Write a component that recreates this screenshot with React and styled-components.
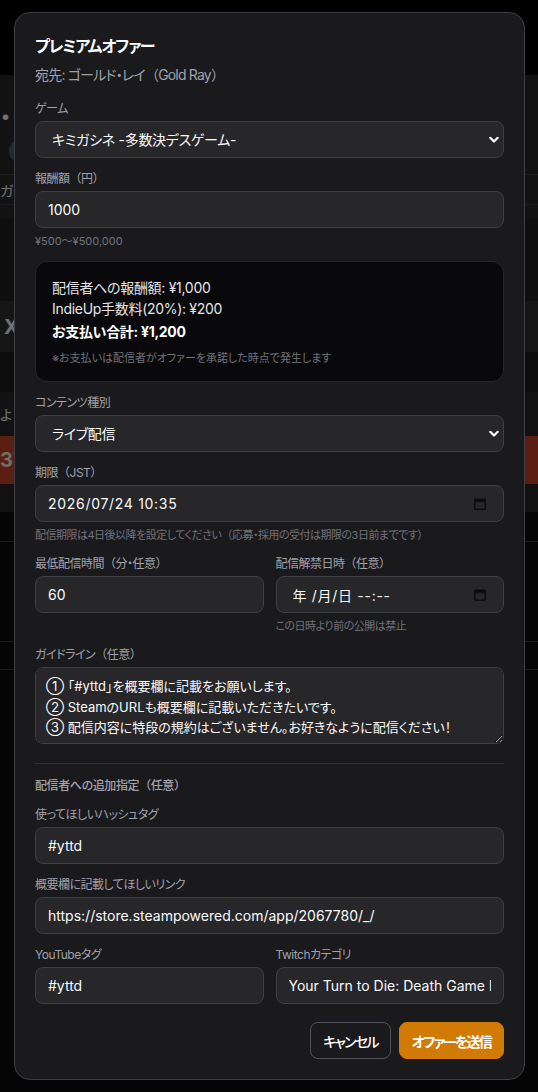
import React from 'react'
import styled, { createGlobalStyle } from 'styled-components'

const GlobalStyle = createGlobalStyle`
  * { box-sizing: border-box; }
  html, body { margin: 0; padding: 0; background: #000; }
  body {
    font-family: Inter, "Noto Sans CJK JP", sans-serif;
    font-feature-settings: "palt";
    color: #fafafa;
  }
`

// full-width brackets keep their spacing, the rest stays proportional
const Wide = styled.span`
  font-feature-settings: normal;
`
const jp = (text) =>
  text.split(/([（）])/).map((part, i) =>
    part === '（' || part === '）' ? <Wide key={i}>{part}</Wide> : part
  )

function ChevronDown() {
  return (
    <svg width="10" height="7" viewBox="0 0 10 7" fill="none">
      <path d="M1.3 1.3 5 5 8.7 1.3" stroke="currentColor" strokeWidth="2.2" strokeLinecap="round" strokeLinejoin="round" />
    </svg>
  )
}

function CalendarIcon() {
  return (
    <svg width="12" height="12" viewBox="0 0 12 12">
      <rect x="0.75" y="1.25" width="10.5" height="10" rx="1" fill="none" stroke="#0c0c0c" strokeWidth="1.5" />
      <rect x="0.75" y="1.25" width="10.5" height="3" fill="#0c0c0c" />
    </svg>
  )
}

export default function App() {
  return (
    <>
      <GlobalStyle />
      <Page>
        <TopBar />
        <Hero>
          <HeroName>・レイ</HeroName>
          <Avatar />
        </Hero>
        <Band $h={30} $bg="#242424" $line>
          <BgText>ガシネ</BgText>
        </Band>
        <Band $h={14} $bg="#242424" />
        <Band $h={82} $bg="#1e1e1e" />
        <Band $h={51} $bg="#2c2c2c" $pad={4}>
          <BgText $size={20} $bold>XI</BgText>
        </Band>
        <Band $h={40} $bg="#181818" />
        <Band $h={44} $bg="#242424">
          <BgText>よ</BgText>
        </Band>
        <Band $h={48} $bg="#b43c24">
          <BgText $size={20} $bold $color="#ddd">37</BgText>
        </Band>
        <Band $h={28} $bg="#222" />
        <Band $h={30} $bg="#0a0a0a" $line />
        <Band $h={100} $bg="#0a0a0a" $line />
        <Band $h={28} $bg="#0a0a0a" $line />
      </Page>

      <Overlay>
        <Modal>
          <Title>プレミアムオファー</Title>
          <Subtitle>{jp('宛先: ゴールド・レイ（Gold Ray）')}</Subtitle>

          <Form>
            <Field>
              <Label>ゲーム</Label>
              <SelectWrap>
                <Select defaultValue="kimi">
                  <option value="kimi">キミガシネ -多数決デスゲーム-</option>
                </Select>
                <SelectArrow>
                  <ChevronDown />
                </SelectArrow>
              </SelectWrap>
            </Field>

            <Field>
              <Label>{jp('報酬額（円）')}</Label>
              <Input defaultValue="1000" />
              <Help $latin>¥500〜¥500,000</Help>
            </Field>

            <Summary>
              <SummaryLine>配信者への報酬額: ¥1,000</SummaryLine>
              <SummaryLine>IndieUp手数料(20%): ¥200</SummaryLine>
              <SummaryLine $strong>お支払い合計: ¥1,200</SummaryLine>
              <SummaryNote>※お支払いは配信者がオファーを承諾した時点で発生します</SummaryNote>
            </Summary>

            <Field>
              <Label>コンテンツ種別</Label>
              <SelectWrap>
                <Select defaultValue="live">
                  <option value="live">ライブ配信</option>
                </Select>
                <SelectArrow>
                  <ChevronDown />
                </SelectArrow>
              </SelectWrap>
            </Field>

            <Field>
              <Label>{jp('期限（JST）')}</Label>
              <DateBox>
                <DateInput defaultValue="2026/07/24 10:35" readOnly />
                <CalendarIcon />
              </DateBox>
              <Help>{jp('配信期限は4日後以降を設定してください（応募・採用の受付は期限の3日前までです）')}</Help>
            </Field>

            <Row>
              <Field>
                <Label>{jp('最低配信時間（分・任意）')}</Label>
                <Input defaultValue="60" />
              </Field>
              <Field>
                <Label>{jp('配信解禁日時（任意）')}</Label>
                <DateBox $indent>
                  <DateInput defaultValue="年 /月/日 --:--" readOnly />
                  <CalendarIcon />
                </DateBox>
                <Help>この日時より前の公開は禁止</Help>
              </Field>
            </Row>

            <Field>
              <Label>{jp('ガイドライン（任意）')}</Label>
              <TextArea
                defaultValue={
                  '① 「#yttd」を概要欄に記載をお願いします。\n② SteamのURLも概要欄に記載いただきたいです。\n③ 配信内容に特段の規約はございません。お好きなように配信ください！'
                }
              />
            </Field>

            <Divider />

            <SectionTitle>{jp('配信者への追加指定（任意）')}</SectionTitle>

            <Field>
              <Label>使ってほしいハッシュタグ</Label>
              <Input defaultValue="#yttd" />
            </Field>

            <Field>
              <Label>概要欄に記載してほしいリンク</Label>
              <Input defaultValue="https://store.steampowered.com/app/2067780/_/" />
            </Field>

            <Row>
              <Field>
                <Label>YouTubeタグ</Label>
                <Input defaultValue="#yttd" />
              </Field>
              <Field>
                <Label>Twitchカテゴリ</Label>
                <Input defaultValue="Your Turn to Die: Death Game by Majority" />
              </Field>
            </Row>

            <Actions>
              <Button type="button">キャンセル</Button>
              <Button type="button" $primary>
                オファーを送信
              </Button>
            </Actions>
          </Form>
        </Modal>
      </Overlay>
    </>
  )
}

/* background page (dimmed behind the dialog) */

const Page = styled.div`
  min-height: 100vh;
  background: #0a0a0a;
  overflow: hidden;
`

const TopBar = styled.header`
  height: 75px;
  background: #000;
`

const Hero = styled.section`
  height: 100px;
  background: #242424;
  border-bottom: 1px solid #3a3a3a;
  padding-top: 28px;
`

const HeroName = styled.h1`
  margin: 0;
  font-size: 22px;
  line-height: 28px;
  font-weight: 700;
  color: #e5e5e5;
  white-space: nowrap;
`

const Avatar = styled.div`
  width: 24px;
  height: 24px;
  margin: 8px 0 0 9px;
  border-radius: 50%;
  background: #38566a;
`

const Band = styled.div`
  height: ${({ $h }) => $h}px;
  background: ${({ $bg }) => $bg};
  border-bottom: ${({ $line }) => ($line ? '1px solid #383838' : 'none')};
  padding-left: ${({ $pad }) => $pad || 0}px;
  display: flex;
  align-items: center;
  overflow: hidden;
  white-space: nowrap;
`

const BgText = styled.span`
  font-size: ${({ $size }) => $size || 14}px;
  font-weight: ${({ $bold }) => ($bold ? 700 : 400)};
  color: ${({ $color }) => $color || '#e5e5e5'};
`

/* dialog */

const Overlay = styled.div`
  position: fixed;
  inset: 0;
  background: rgba(0, 0, 0, 0.5);
  display: flex;
  align-items: center;
  justify-content: center;
  padding: 11px 13px 11px 14px;
`

const Modal = styled.div`
  width: 100%;
  max-width: 512px;
  background: #1a1a1d;
  border: 1px solid #3f3f46;
  border-radius: 16px;
  padding: 20px;
`

const Title = styled.h2`
  margin: 0;
  font-size: 16px;
  line-height: 26px;
  font-weight: 700;
  letter-spacing: -1.2px;
  color: #fafafa;
`

const Subtitle = styled.p`
  margin: 6px 0 0;
  font-size: 14px;
  line-height: 20px;
  letter-spacing: -0.8px;
  color: #a1a1aa;
`

const Form = styled.div`
  display: flex;
  flex-direction: column;
  gap: 12px;
  margin-top: 15px;
`

const Field = styled.div`
  display: flex;
  flex-direction: column;
  gap: 4px;
  min-width: 0;
`

const Label = styled.label`
  font-size: 12px;
  line-height: 17px;
  letter-spacing: -0.5px;
  color: #a1a1aa;
`

const Input = styled.input`
  width: 100%;
  height: 37px;
  padding: 0 12px;
  background: #27272a;
  border: 1px solid #3f3f46;
  border-radius: 8px;
  color: #fafafa;
  font: inherit;
  font-size: 14px;
  outline: none;
`

const SelectWrap = styled.div`
  position: relative;
`

const Select = styled.select`
  width: 100%;
  height: 37px;
  padding: 0 30px 0 16px;
  appearance: none;
  background: #27272a;
  border: 1px solid #3f3f46;
  border-radius: 8px;
  color: #fafafa;
  font: inherit;
  font-size: 14px;
  letter-spacing: -0.3px;
  outline: none;
`

const SelectArrow = styled.span`
  position: absolute;
  right: 5px;
  top: 50%;
  transform: translateY(-50%);
  display: flex;
  color: #fff;
  pointer-events: none;
`

const DateBox = styled.div`
  display: flex;
  align-items: center;
  height: 37px;
  padding: 0 17px 0 ${({ $indent }) => ($indent ? 16 : 12)}px;
  background: #27272a;
  border: 1px solid #3f3f46;
  border-radius: 8px;
`

const DateInput = styled.input`
  flex: 1;
  min-width: 0;
  padding: 0;
  border: none;
  background: transparent;
  color: #fafafa;
  font: inherit;
  font-size: 14px;
  letter-spacing: 0.7px;
  outline: none;
`

const Help = styled.p`
  margin: 1px 0 0;
  font-size: 11px;
  line-height: 16px;
  letter-spacing: ${({ $latin }) => ($latin ? 0 : -0.5)}px;
  color: #71717a;
`

const Summary = styled.div`
  background: #09090b;
  border: 1px solid #27272a;
  border-radius: 12px;
  padding: 15px 16px;
`

const SummaryLine = styled.div`
  font-size: 14px;
  line-height: 21px;
  letter-spacing: -0.3px;
  margin-top: ${({ $strong }) => ($strong ? 2 : 0)}px;
  font-weight: ${({ $strong }) => ($strong ? 700 : 400)};
  color: ${({ $strong }) => ($strong ? '#fff' : '#e4e4e7')};
`

const SummaryNote = styled.div`
  margin-top: 8px;
  font-size: 11px;
  line-height: 16px;
  color: #71717a;
`

const Row = styled.div`
  display: grid;
  grid-template-columns: 1fr 1fr;
  gap: 12px;
`

const TextArea = styled.textarea`
  width: 100%;
  height: 77px;
  padding: 8px 10px;
  background: #27272a;
  border: 1px solid #3f3f46;
  border-radius: 8px;
  color: #fafafa;
  font: inherit;
  font-size: 13px;
  line-height: 20.5px;
  resize: vertical;
  outline: none;
`

const Divider = styled.hr`
  margin: 7px 0 2px;
  border: none;
  border-top: 1px solid #2e2e33;
`

const SectionTitle = styled.h3`
  margin: 0;
  font-size: 12px;
  line-height: 16px;
  font-weight: 500;
  letter-spacing: -0.4px;
  color: #a1a1aa;
`

const Actions = styled.div`
  display: flex;
  justify-content: flex-end;
  gap: 8px;
  margin-top: 6px;
`

const Button = styled.button`
  height: 37px;
  padding: 0 12px;
  border-radius: 8px;
  font: inherit;
  font-size: 14px;
  letter-spacing: -1.8px;
  font-weight: ${({ $primary }) => ($primary ? 700 : 500)};
  color: #fff;
  background: ${({ $primary }) => ($primary ? '#d17a04' : 'transparent')};
  border: 1px solid ${({ $primary }) => ($primary ? '#d17a04' : '#52525b')};
  cursor: pointer;
`
